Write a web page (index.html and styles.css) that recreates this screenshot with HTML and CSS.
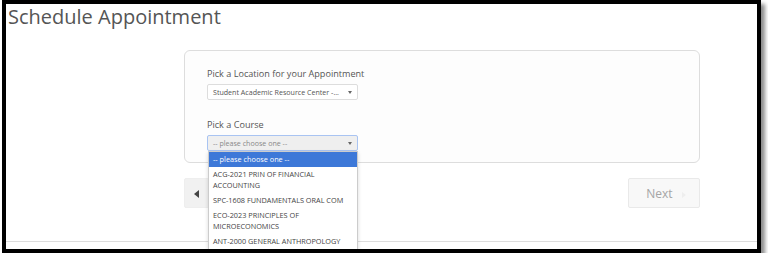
FILE: index.html
```html
<!DOCTYPE html>
<html lang="en">
<head>
  <meta charset="UTF-8" />
  <title>Schedule Appointment</title>
  <link rel="stylesheet" href="styles.css">
</head>
<body>
  <div class="frame">
    <h1 class="title">Schedule Appointment</h1>

    <div class="wizard">
      <div class="card">
        <div class="field-label">Pick a Location for your Appointment</div>
        <div class="select">
          <span>Student Academic Resource Center -...</span>
          <i class="caret"></i>
        </div>

        <div class="field-label second">Pick a Course</div>
        <div class="select focused">
          <span>-- please choose one --</span>
          <i class="caret"></i>
          <ul class="dropdown">
            <li class="active">-- please choose one --</li>
            <li>ACG-2021 PRIN OF FINANCIAL ACCOUNTING</li>
            <li>SPC-1608 FUNDAMENTALS ORAL COM</li>
            <li>ECO-2023 PRINCIPLES OF MICROECONOMICS</li>
            <li>ANT-2000 GENERAL ANTHROPOLOGY</li>
          </ul>
        </div>
      </div>

      <div class="nav">
        <button class="btn back"><i class="left-arrow"></i></button>
        <button class="btn next">Next <i class="right-arrow"></i></button>
      </div>
    </div>

    <div class="footer-line"></div>
  </div>
</body>
</html>
```

FILE: styles.css
```css
body { margin: 0; font-family: "Open Sans", "Liberation Sans", sans-serif; background: #fff; }
.frame { box-sizing: border-box; margin-left: 2px; width: 759px; height: 253px; border: 4px solid #000; box-shadow: 4px 4px 4px rgba(0,0,0,.45); overflow: hidden; background: #fff; }
.title { margin: 0; padding-left: 2px; font-size: 20px; line-height: 26px; font-weight: 400; color: #555; }

.wizard { margin: 20px 0 0 178px; width: 516px; }
.card { height: 113px; box-sizing: border-box; border: 1px solid #ddd; border-radius: 6px; background: #fdfdfd; padding: 16px 0 0 22px; }
.field-label { font-size: 9.1px; line-height: 14px; color: #555; margin-bottom: 3px; }
.field-label.second { margin-top: 18px; }

.select { position: relative; box-sizing: border-box; width: 151px; height: 16px; border: 1px solid #ddd; border-radius: 2px; background: #fff; padding: 0 5px; font-size: 7.1px; line-height: 14px; color: #555; }
.select.focused { border-color: #a9c4f2; background: #efefef; color: #888; }
.caret { position: absolute; right: 5px; top: 6px; width: 0; height: 0; border-left: 2.5px solid transparent; border-right: 2.5px solid transparent; border-top: 3px solid #666; }

.dropdown { position: absolute; left: 0; top: 15px; width: 148px; margin: 0; padding: 0; list-style: none; background: #fff; border: 1px solid #ccc; box-shadow: 0 2px 4px rgba(0,0,0,.15); z-index: 2; }
.dropdown li { padding: 2px 4px; font-size: 7.3px; line-height: 11px; color: #444; }
.dropdown li.active { background: #3d78d8; color: #fff; }

.nav { display: flex; justify-content: space-between; margin-top: 15px; }
.btn { height: 30px; box-sizing: border-box; border: 1px solid #e9e9e9; border-radius: 2px; background: #f5f5f5; font-family: inherit; }
.back { width: 42px; border-color: #eee; background: #f1f1f1; padding: 0 0 0 9px; text-align: left; }
.left-arrow { display: inline-block; width: 0; height: 0; border-top: 4px solid transparent; border-bottom: 4px solid transparent; border-right: 5px solid #444; }
.next { width: 72px; background: #f8f8f8; font-size: 12px; color: #a5a5a5; padding: 0 0 0 4px; }
.right-arrow { display: inline-block; margin-left: 6px; width: 0; height: 0; border-top: 3px solid transparent; border-bottom: 3px solid transparent; border-left: 4px solid #eee; }

.footer-line { margin-top: 33px; border-top: 1px solid #ddd; }
```
